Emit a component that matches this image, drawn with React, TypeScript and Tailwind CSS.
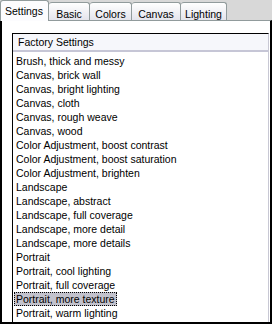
import React from 'react';

const tabs = [
    { label: 'Settings', w: 'w-[49px]' },
    { label: 'Basic', w: 'w-[41px]' },
    { label: 'Colors', w: 'w-[42px]' },
    { label: 'Canvas', w: 'w-[49px]' },
    { label: 'Lighting', w: 'w-[46px]' },
];

const presets = [
    'Brush, thick and messy',
    'Canvas, brick wall',
    'Canvas, bright lighting',
    'Canvas, cloth',
    'Canvas, rough weave',
    'Canvas, wood',
    'Color Adjustment, boost contrast',
    'Color Adjustment, boost saturation',
    'Color Adjustment, brighten',
    'Landscape',
    'Landscape, abstract',
    'Landscape, full coverage',
    'Landscape, more detail',
    'Landscape, more details',
    'Portrait',
    'Portrait, cool lighting',
    'Portrait, full coverage',
    'Portrait, more texture',
    'Portrait, warm lighting',
];

const selected = 'Portrait, more texture';

const App: React.FC = () => {
    return (
        <div className="w-[272px] h-[324px] bg-[#d8d8d8] flex flex-col font-['Liberation_Sans',Arial,sans-serif] text-[10.5px] text-black overflow-hidden">
            {/* Tab strip */}
            <div className="relative z-10 flex h-[20px] items-end">
                {tabs.map((t, i) =>
                    i === 0 ? (
                        <div
                            key={t.label}
                            className={`${t.w} h-[21px] -mb-px bg-[#fcfcfe] border border-b-0 border-[#919b9c] rounded-t-[3px] pl-[4px] pt-[4px] leading-[12px]`}
                        >
                            {t.label}
                        </div>
                    ) : (
                        <div
                            key={t.label}
                            className={`${t.w} h-[18px] bg-gradient-to-b from-[#ffffff] to-[#e4e4ec] border border-b-0 border-l-0 border-[#919b9c] rounded-t-[3px] flex justify-center pt-[5px] leading-[12px]`}
                        >
                            {t.label}
                        </div>
                    )
                )}
            </div>

            {/* Panel */}
            <div className="flex-1 flex flex-col bg-white border-t border-t-[#919b9c] border-l-2 border-l-black border-r-2 border-r-black border-b-2 border-b-black pt-[12px] pl-[10px] pr-[1px]">
                {/* List box */}
                <div className="flex-1 flex flex-col border-t border-l border-black border-r border-r-[#c8c8d4]">
                    <div className="h-[18px] bg-[#f6f7fb] border-b-2 border-[#c6c6d6] pl-[5px] leading-[16px]">
                        Factory Settings
                    </div>
                    <div className="flex flex-col pt-[2px] px-[1px]">
                        {presets.map((p) => (
                            <div key={p} className="h-[14px] flex">
                                <span
                                    className={`h-[14px] px-[1px] leading-[12px] border ${
                                        p === selected
                                            ? 'bg-[#c2c2cc] border-dotted border-black'
                                            : 'border-transparent'
                                    }`}
                                >
                                    {p}
                                </span>
                            </div>
                        ))}
                    </div>
                </div>
            </div>
        </div>
    );
};

export default App;
